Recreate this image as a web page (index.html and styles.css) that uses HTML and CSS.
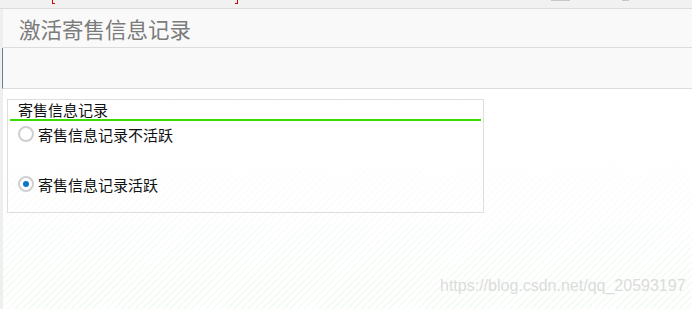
FILE: index.html
```html
<!DOCTYPE html>
<html lang="zh-CN">
  <head>
    <meta charset="UTF-8" />
    <meta name="viewport" content="width=device-width, initial-scale=1.0" />
    <title>激活寄售信息记录</title>
    <link rel="stylesheet" href="styles.css">
  </head>
  <body>
    <div class="top-strip">
      <span class="mark mark-left"></span>
      <span class="mark mark-right"></span>
      <span class="tab tab-a"></span>
      <span class="tab tab-b"></span>
    </div>
    <div class="frame">
      <div class="title-bar">激活寄售信息记录</div>
      <div class="toolbar"></div>
      <div class="content">
        <div class="group">
          <div class="group-title">寄售信息记录</div>
          <label class="radio-row">
            <span class="radio"></span>
            <span>寄售信息记录不活跃</span>
          </label>
          <label class="radio-row">
            <span class="radio checked"></span>
            <span>寄售信息记录活跃</span>
          </label>
        </div>
        <div class="watermark">https://blog.csdn.net/qq_20593197</div>
      </div>
    </div>
  </body>
</html>
```

FILE: styles.css
```css
body {
  margin: 0;
  padding: 0;
  width: 692px;
  height: 309px;
  overflow: hidden;
  font-family: "Noto Sans CJK SC", "Liberation Sans", sans-serif;
  background-color: #efefef;
}
.top-strip {
  position: relative;
  height: 8px;
  background-color: #f1f1f1;
  border-bottom: 1px solid #dcdcdc;
}
.mark {
  position: absolute;
  top: 0;
  width: 2px;
  height: 3px;
  border-bottom: 1px solid #d40000;
}
.mark-left {
  left: 52px;
  border-left: 1px solid #d40000;
}
.mark-right {
  left: 235px;
  border-right: 1px solid #d40000;
}
.tab {
  position: absolute;
  top: 0;
  height: 1px;
  background-color: #c8c8c8;
}
.tab-a {
  left: 551px;
  width: 19px;
}
.tab-b {
  left: 622px;
  width: 7px;
}
.frame {
  margin-left: 3px;
  background-color: #fff;
}
.title-bar {
  height: 38px;
  padding-left: 16px;
  background-color: #f9f9f9;
  border-bottom: 1px solid #dcdcdc;
  color: #7b7b7b;
  font-size: 21.5px;
  line-height: 40px;
}
.toolbar {
  height: 40px;
  background-color: #f9f9f9;
  border-bottom: 1px solid #dcdcdc;
  border-left: 1px solid #6f7f8c;
  margin-left: -1px;
}
.content {
  position: relative;
  height: 220px;
  padding: 10px 0 0 4px;
  box-sizing: border-box;
  background:
    linear-gradient(to bottom, #ffffff 0%, rgba(255, 255, 255, 0.85) 40%, rgba(255, 255, 255, 0.4) 100%),
    repeating-linear-gradient(-45deg, #ffffff 0 3px, #eef8ee 3px 5px);
}
.group {
  width: 477px;
  height: 114px;
  border: 1px solid #dedede;
  padding: 0 2px;
  box-sizing: border-box;
}
.group-title {
  padding-left: 8px;
  height: 19px;
  line-height: 19px;
  font-size: 15px;
  color: #111;
  border-bottom: 2px solid #3ddc00;
}
.radio-row {
  display: flex;
  align-items: center;
  gap: 4px;
  height: 26px;
  padding-left: 8px;
  font-size: 15px;
  color: #111;
}
.radio-row + .radio-row {
  margin-top: 24px;
}
.radio {
  width: 12px;
  height: 12px;
  border: 2px solid #cfcfcf;
  border-radius: 50%;
  background-color: #fff;
  display: flex;
  align-items: center;
  justify-content: center;
}
.radio.checked::after {
  content: "";
  width: 6px;
  height: 6px;
  border-radius: 50%;
  background-color: #0a78c8;
}
.watermark {
  position: absolute;
  left: 437px;
  top: 188px;
  font-family: "Liberation Sans", sans-serif;
  font-size: 16px;
  color: #dcdcdc;
}
```
